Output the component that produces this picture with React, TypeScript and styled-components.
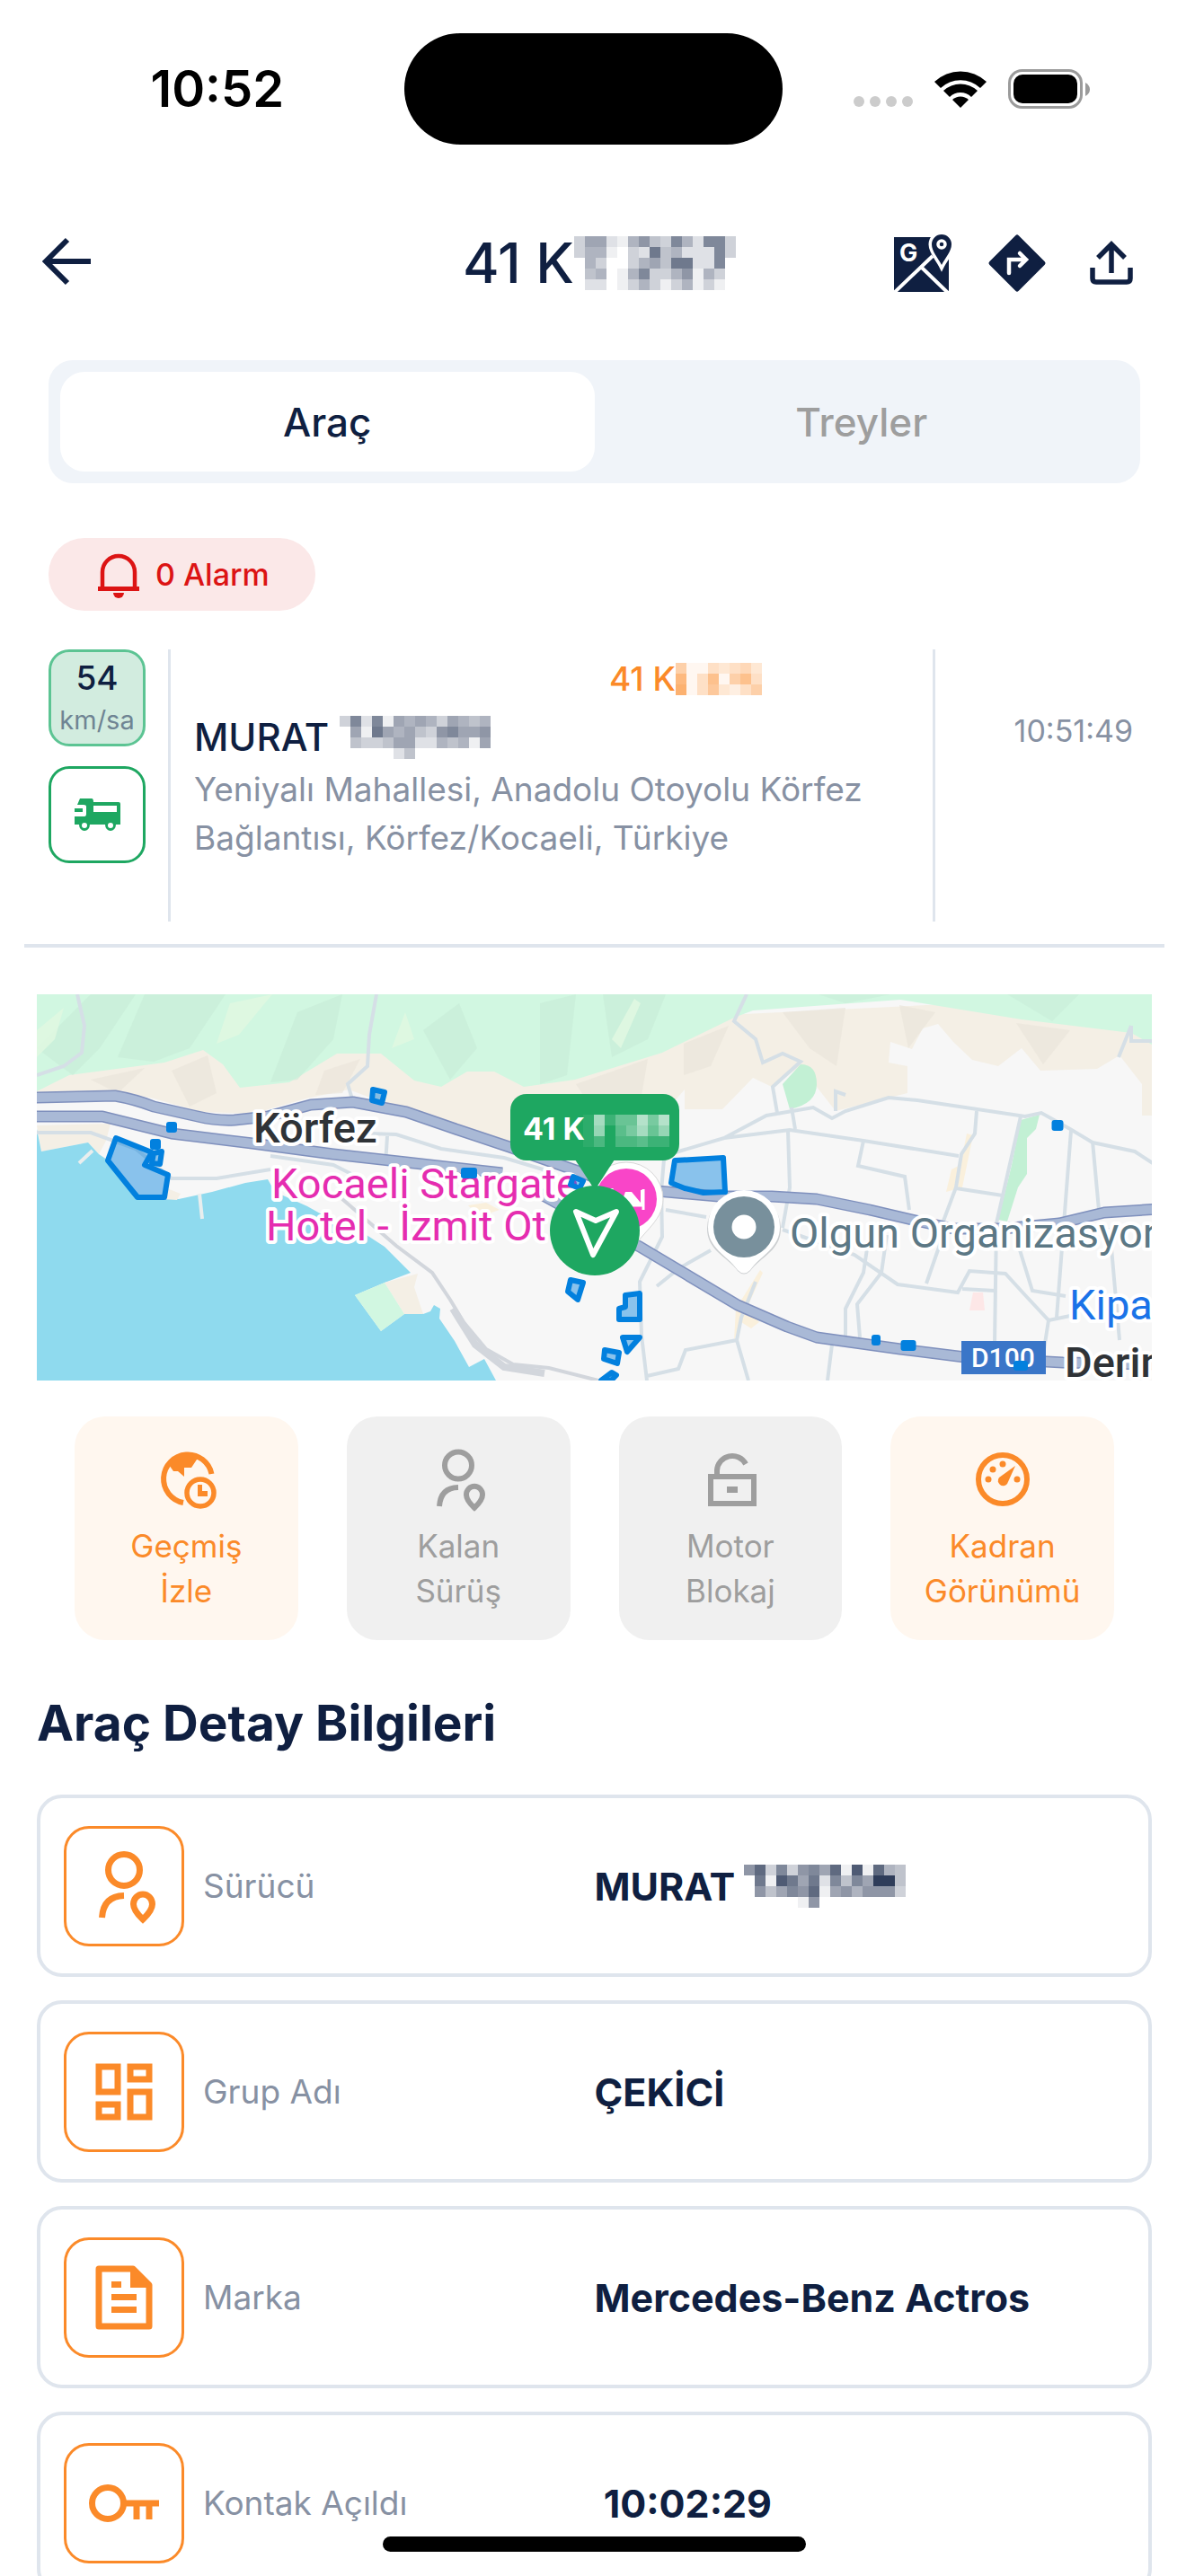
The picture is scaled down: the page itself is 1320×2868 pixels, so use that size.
import React, { useState } from "react";
import styled, { createGlobalStyle } from "styled-components";

const color = {
  navy: "#0f1f41",
  slate: "#8791a3",
  gray: "#9e9e9e",
  line: "#dfe5ed",
  orange: "#fb8a29",
  green: "#1ea761",
  red: "#dc1414",
};

const GlobalStyle = createGlobalStyle`
  *, *::before, *::after { box-sizing: border-box; }
  body {
    margin: 0;
    background: #ffffff;
    color: ${color.navy};
    font-family: Inter, "Liberation Sans", sans-serif;
  }
  button {
    border: 0;
    padding: 0;
    margin: 0;
    background: none;
    color: inherit;
    font: inherit;
    cursor: pointer;
  }
  svg { display: block; flex: none; }
`;

const Screen = styled.div`
  display: flex;
  flex-direction: column;
  height: 100vh;
  overflow: hidden;
`;

/* ---------- status bar ---------- */

const StatusBar = styled.div`
  display: grid;
  grid-template-columns: 1fr 421px 1fr;
  align-items: center;
  padding: 37px 0 24px;
  flex: none;
`;

const Clock = styled.div`
  padding-left: 34px;
  text-align: center;
  color: #000;
  font-size: 56px;
  font-weight: 600;
  line-height: 64px;
`;

const Island = styled.div`
  height: 124px;
  border-radius: 62px;
  background: #000;
`;

const StatusIcons = styled.div`
  display: flex;
  align-items: center;
  justify-content: flex-end;
  gap: 24px;
  padding-right: 106px;
`;

const Dots = styled.div`
  display: flex;
  gap: 6px;
  padding-top: 28px;
`;

const Dot = styled.span`
  width: 12px;
  height: 12px;
  border-radius: 6px;
  background: #cccccc;
`;

/* ---------- header ---------- */

const Header = styled.header`
  display: grid;
  grid-template-columns: 1fr auto 1fr;
  align-items: center;
  height: 216px;
  padding: 0 50px 0 40px;
  flex: none;
`;

const Title = styled.h1`
  display: flex;
  align-items: center;
  margin: 0;
  padding-left: 24px;
  font-size: 62px;
  font-weight: 500;
  line-height: 80px;
`;

const HeaderActions = styled.div`
  display: flex;
  justify-content: flex-end;
  gap: 39px;
`;

/* ---------- tabs ---------- */

const Tabs = styled.div`
  display: flex;
  margin: 0 51px 0 54px;
  padding: 13px;
  border-radius: 27px;
  background: #f0f4f9;
`;

const Tab = styled.button<{ $active: boolean }>`
  flex: 1;
  height: 111px;
  border-radius: 27px;
  background: ${(p) => (p.$active ? "#ffffff" : "transparent")};
  color: ${(p) => (p.$active ? color.navy : color.gray)};
  font-size: 44px;
  font-weight: 500;
`;

/* ---------- vehicle summary ---------- */

const Main = styled.main`
  flex: 1;
  min-height: 0;
  overflow: hidden;
`;

const AlarmPill = styled.button`
  display: flex;
  align-items: center;
  gap: 14px;
  height: 81px;
  margin: 61px 54px 43px;
  padding: 0 51px;
  border-radius: 40px;
  background: #fbe8e8;
  color: ${color.red};
  font-size: 34px;
  font-weight: 500;
`;

const Summary = styled.section`
  display: flex;
  min-height: 332px;
  margin: 0 24px 0 27px;
  padding: 0 27px 25px;
  border-bottom: 4px solid ${color.line};
`;

const Badges = styled.div`
  display: flex;
  flex-direction: column;
  gap: 22px;
  width: 108px;
  margin-right: 25px;
`;

const Badge = styled.div<{ $filled?: boolean }>`
  display: flex;
  flex-direction: column;
  align-items: center;
  justify-content: center;
  height: 108px;
  border: 3px solid ${(p) => (p.$filled ? "#5cc493" : color.green)};
  border-radius: 23px;
  background: ${(p) => (p.$filled ? "#d2ecdf" : "#ffffff")};
`;

const Speed = styled.span`
  font-size: 37px;
  font-weight: 500;
  line-height: 50px;
`;

const Unit = styled.span`
  color: #6f8493;
  font-size: 29px;
  line-height: 44px;
`;

const Info = styled.div`
  flex: 1;
  padding: 6px 24px 0 26px;
  border: solid ${color.line};
  border-width: 0 3px;
`;

const Plate = styled.div`
  display: flex;
  align-items: center;
  justify-content: flex-end;
  padding-right: 166px;
  color: ${color.orange};
  font-size: 37px;
  font-weight: 500;
  line-height: 54px;
`;

const DriverName = styled.div`
  display: flex;
  align-items: center;
  gap: 12px;
  margin-top: 6px;
  font-size: 42px;
  font-weight: 500;
  line-height: 63px;
`;

const Address = styled.p`
  margin: 0;
  color: ${color.slate};
  font-size: 37px;
  line-height: 54px;
`;

const UpdateTime = styled.time`
  width: 228px;
  padding: 64px 8px 0 0;
  color: ${color.slate};
  font-size: 34px;
  line-height: 54px;
  text-align: right;
`;

/* ---------- map ---------- */

const MapFrame = styled.div`
  margin: 52px 38px 0 41px;
  height: 430px;
  overflow: hidden;
  background: #f7f7f7;

  svg {
    width: 100%;
    height: 100%;
  }

  text {
    font-family: Roboto, "Liberation Sans", sans-serif;
    font-size: 47px;
    paint-order: stroke;
    stroke: #ffffff;
    stroke-width: 8px;
    stroke-linejoin: round;
  }

  text.road {
    font-size: 30px;
    stroke: none;
  }

  text.pin {
    font-family: Inter, "Liberation Sans", sans-serif;
    font-size: 34px;
    stroke: none;
  }
`;

/* ---------- quick actions ---------- */

const Actions = styled.div`
  display: grid;
  grid-template-columns: repeat(4, 1fr);
  gap: 54px;
  margin: 40px 80px 0 83px;
`;

const Action = styled.button<{ $muted?: boolean }>`
  display: flex;
  flex-direction: column;
  align-items: center;
  gap: 13px;
  height: 249px;
  padding-top: 34px;
  border-radius: 34px;
  background: ${(p) => (p.$muted ? "#f0f0f0" : "#fff7ef")};
  color: ${(p) => (p.$muted ? color.gray : color.orange)};
  font-size: 35px;
  line-height: 50px;
  white-space: pre-line;
`;

/* ---------- details ---------- */

const SectionTitle = styled.h2`
  margin: 52px 41px 39px;
  font-size: 55px;
  font-weight: 700;
  line-height: 81px;
`;

const DetailList = styled.dl`
  display: flex;
  flex-direction: column;
  gap: 26px;
  margin: 0 38px 0 41px;
`;

const DetailRow = styled.div`
  display: grid;
  grid-template-columns: 1fr 1fr;
  align-items: center;
  height: 203px;
  padding: 0 26px;
  border: 4px solid ${color.line};
  border-radius: 28px;
`;

const DetailLabel = styled.dt`
  display: flex;
  align-items: center;
  gap: 21px;
  color: ${color.slate};
  font-size: 37px;
`;

const DetailIcon = styled.span`
  display: flex;
  align-items: center;
  justify-content: center;
  width: 134px;
  height: 134px;
  border: 3px solid ${color.orange};
  border-radius: 28px;
  color: ${color.orange};
`;

const DetailValue = styled.dd`
  display: flex;
  align-items: center;
  gap: 10px;
  margin: 0;
  font-size: 43px;
  font-weight: 700;
  white-space: pre;
`;

const HomeIndicator = styled.div`
  position: fixed;
  bottom: 27px;
  left: 50%;
  width: 471px;
  height: 17px;
  margin-left: -234px;
  border-radius: 9px;
  background: #000;
`;

/* ---------- censored text ---------- */

/* Each character is one cell; a hex digit gives the cell's opacity, "." is empty. */
function Mosaic({ rows, fill, cell = 12 }: { rows: string[]; fill: string; cell?: number }) {
  const width = Math.max(...rows.map((r) => r.length)) * cell;
  return (
    <svg width={width} height={rows.length * cell} shapeRendering="crispEdges" aria-hidden="true">
      {rows.flatMap((row, y) =>
        [...row].map((c, x) =>
          c === "." ? null : (
            <rect key={`${x}-${y}`} x={x * cell} y={y * cell} width={cell} height={cell} fill={fill} opacity={parseInt(c, 16) / 15} />
          ),
        ),
      )}
    </svg>
  );
}

const titleMosaic = [
  "366215743852883",
  "3551.3294522283",
  ".53..356499228.",
  ".45.1583357153.",
  ".22.1353135131.",
];
const plateMosaic = ["61143453", "91481684", "a1473246"];
const nameMosaic = ["38281656536545", ".6196564378667", ".4334662254516", ".....24......."];
const detailMosaic = ["7a383786a1b1a54", ".91b96928486dd4", ".74687a16757773", ".....17........"];
const pinMosaic = ["19255a6a", "18.46958", "13.33422"];

/* ---------- icons ---------- */

const WifiIcon = () => (
  <svg width="58" height="42" viewBox="0 0 58 42" aria-hidden="true">
    <path d="M0 13A42 42 0 0 1 58 13L51 20A32 32 0 0 0 7 20Z" />
    <path d="M10 23A28 28 0 0 1 48 23L41 30A17 17 0 0 0 17 30Z" />
    <path d="M20 33A13 13 0 0 1 38 33L29 42Z" />
  </svg>
);

const BatteryIcon = () => (
  <svg width="92" height="44" viewBox="0 0 92 44" aria-hidden="true">
    <rect x="1.5" y="1.5" width="80" height="41" rx="14" fill="none" stroke="#9b9b9b" strokeWidth="3" />
    <rect x="6" y="6" width="71" height="32" rx="10" />
    <path d="M86 15Q91 18 91 22.500Q91 27 86 30Z" fill="#9b9b9b" />
  </svg>
);

const BackIcon = () => (
  <svg width="66" height="66" viewBox="0 0 66 66" fill="none" stroke="currentColor" strokeWidth="6" aria-hidden="true">
    <path d="M61 33H11M35 9L11 33L35 57" />
  </svg>
);

const MapsIcon = () => (
  <svg width="66" height="66" viewBox="0 0 66 66" aria-hidden="true">
    <path d="M1 4H62V65H1Z" fill="currentColor" />
    <path d="M1 66L44 25M32 38L62 67" stroke="#fff" strokeWidth="4" />
    <text x="7" y="31" fontSize="27" fontWeight="700" fill="#fff">G</text>
    <path d="M54 1A11 11 0 0 1 65 12C65 20 58 27 54 35C50 27 43 20 43 12A11 11 0 0 1 54 1Z" fill="currentColor" stroke="#fff" strokeWidth="7" paintOrder="stroke" />
    <circle cx="54" cy="12" r="4" fill="none" stroke="#fff" strokeWidth="3.500" />
  </svg>
);

const DirectionsIcon = () => (
  <svg width="66" height="66" viewBox="0 0 66 66" aria-hidden="true">
    <path d="M33 4L62 33L33 62L4 33Z" fill="currentColor" stroke="currentColor" strokeWidth="5" strokeLinejoin="round" />
    <path d="M24 44V29H42M36 22L43 29L36 36" fill="none" stroke="#fff" strokeWidth="4.500" strokeLinecap="round" />
  </svg>
);

const ShareIcon = () => (
  <svg width="66" height="66" viewBox="0 0 66 66" fill="none" stroke="currentColor" strokeWidth="5.500" aria-hidden="true">
    <path d="M33 44V12M18 27L33 12L48 27" />
    <path d="M12 38V50Q12 54 16 54H50Q54 54 54 50V38" />
  </svg>
);

const BellIcon = () => (
  <svg width="54" height="54" viewBox="0 0 54 54" aria-hidden="true">
    <path d="M9 41V24A18 18 0 0 1 45 24V41" fill="none" stroke="currentColor" strokeWidth="4.500" />
    <path d="M4 40H50V45H4Z" fill="currentColor" />
    <path d="M21 47H33A6 6 0 0 1 21 47Z" fill="currentColor" />
  </svg>
);

const TruckIcon = () => (
  <svg width="54" height="54" viewBox="0 0 54 54" aria-hidden="true">
    <path
      fill={color.green}
      fillRule="evenodd"
      d="M8 9H21Q23 9 23 13H51Q53 13 53 15V38H48A6 7 0 0 1 36 38H19A6 7 0 0 1 7 38H2V29H13Q15 29 15 26V18Q15 16 12 16H5ZM23 17V24H49V17Z"
    />
    <circle cx="13" cy="39" r="3" fill="#fff" />
    <circle cx="42" cy="39" r="3" fill="#fff" />
    <path fill={color.green} d="M2 20H11V24H2Z" />
  </svg>
);

const DriverIcon = ({ size = 84 }: { size?: number }) => (
  <svg width={size} height={size} viewBox="0 0 84 84" fill="none" stroke="currentColor" strokeWidth="7" aria-hidden="true">
    <circle cx="42" cy="24" r="17.500" />
    <path d="M17.500 77Q19 53 42 52.500" />
    <path d="M63 79Q52.500 69 52.500 62A10.500 11 0 0 1 73.500 62Q73.500 69 63 79Z" />
  </svg>
);

const GridIcon = () => (
  <svg width="84" height="84" viewBox="0 0 84 84" fill="none" stroke="currentColor" strokeWidth="7" aria-hidden="true">
    <path d="M14 14H35V42H14ZM49 14H70V28H49ZM14 56H35V70H14ZM49 42H70V70H49Z" />
  </svg>
);

const DocumentIcon = () => (
  <svg width="84" height="84" viewBox="0 0 84 84" aria-hidden="true">
    <path d="M14 10H52L70 28V74H14Z" fill="none" stroke="currentColor" strokeWidth="7" strokeLinejoin="round" />
    <path d="M49 7H53L73 28V31H49ZM28 24H39V31H28ZM28 38H56V45H28ZM28 52H56V59H28Z" fill="currentColor" />
  </svg>
);

const KeyIcon = () => (
  <svg width="84" height="84" viewBox="0 0 84 84" fill="none" stroke="currentColor" strokeWidth="7" aria-hidden="true">
    <circle cx="24" cy="42" r="17.500" />
    <path d="M43 42H81M56 42V60M70 42V60" />
  </svg>
);

const HistoryIcon = () => (
  <svg width="72" height="72" viewBox="0 0 72 72" aria-hidden="true">
    <path d="M33 62A27 27 0 1 1 64.500 30" fill="none" stroke="currentColor" strokeWidth="6" />
    <path d="M15 17L22 27L27 27L34 33L34 23H42L48 14L54 13L46 8L32 7Z" fill="currentColor" />
    <circle cx="52" cy="51" r="15" fill="none" stroke="currentColor" strokeWidth="5.500" />
    <path d="M49 42H54V49H60V55H49Z" fill="currentColor" />
  </svg>
);

const UnlockIcon = () => (
  <svg width="72" height="72" viewBox="0 0 72 72" aria-hidden="true">
    <path d="M14 33H62V63H14ZM21 33V26A17 17 0 0 1 53 19" fill="none" stroke="currentColor" strokeWidth="6" />
    <path d="M32 44H44V51H32Z" fill="currentColor" />
  </svg>
);

const GaugeIcon = () => (
  <svg width="72" height="72" viewBox="0 0 72 72" fill="currentColor" aria-hidden="true">
    <circle cx="36" cy="36" r="27" fill="none" stroke="currentColor" strokeWidth="6" />
    <path d="M32 34L50 21L41 41A5.500 5.500 0 1 1 32 34Z" />
    <circle cx="20" cy="36" r="3.500" />
    <circle cx="25" cy="25" r="3.500" />
    <circle cx="36" cy="19" r="3.500" />
    <circle cx="52" cy="36" r="3.500" />
  </svg>
);

/* ---------- map drawing ---------- */

const motorways = [
  "M-5 115L87 113Q110 117 130 125L179 136Q200 141 220 140L257 136L305 123L352 120L411 131L469 151L526 170L625 205L690 219L759 225L818 225L868 228L927 240L974 251L1020 261H1075L1138 255L1188 243L1250 239",
  "M-5 136H73L150 155L240 166L330 178L411 187L518 199",
  "M560 222L620 255L671 281L780 346L835 370L868 382L961 395L1033 404L1142 410L1250 412",
];

const streets = [
  "M0 154H60L110 172L150 205H200L260 195",
  "M260 180L330 190L350 200M370 155L400 156L450 172L520 182L570 197M390 158L388 190",
  "M45 0L53 35L50 65L30 80L0 90M378 0L370 45L368 80L346 100L352 120",
  "M711 176L765 160L838 151L920 163L1026 180M765 160L812 135L864 126L885 138L900 130L948 115L980 118L1100 136L1118 132L1150 150L1175 165L1222 175L1242 188",
  "M840 126L844 150M824 132L819 103L850 75L830 66L808 76L800 50L776 30L790 0M836 152L838 215L830 260M920 163L914 191L966 203L971 240",
  "M1046 130L1044 155L1029 178L1023 215L1008 255M1023 216L1075 224M1095 136L1068 255L1066 390M1151 152L1145 230L1135 360M1175 164L1182 240",
  "M699 172L695 219L696 270L671 320L673 380L679 430M700 240L745 248M750 285L715 305L690 325M679 425L714 417L722 396L779 385M779 385L784 360L800 320M779 385L792 430",
  "M830 262L910 290L958 323L1025 332L1038 308L1078 311L1100 335L1126 363L1121 395M926 270L920 310L900 350L900 380M946 268L940 310L913 345L916 382M1008 270L990 322M1087 262L1108 330L1145 336M1030 328L1066 330M1194 260L1205 385M885 390L880 430M1126 363L1150 358",
  "M1218 35L1204 70M1218 35V52H1242M889 130V108L900 112",
];

const hillShades = [
  "M0 60L40 20L60 0H110L70 60L40 90Z",
  "M120 0H210L170 60L130 75L90 70Z",
  "M290 20L340 0L330 50L290 95L260 98Z",
  "M430 40L470 10L490 60L460 95Z",
  "M560 10L600 0L590 90L560 100Z",
  "M630 0H700L680 50L640 70Z",
  "M870 0H950L900 10Z",
  "M1080 0L1160 0L1130 30Z",
];

const rockShades = [
  "M60 95L120 82L90 110Z",
  "M150 85L190 68L200 110L170 125Z",
  "M320 85L360 72L340 110L310 112Z",
  "M600 100L680 72L670 130L640 160Z",
  "M720 55L770 35L750 80L720 90Z",
  "M830 20L900 15L890 80L860 60Z",
  "M960 12L1000 20L970 60Z",
  "M1090 32L1150 40L1120 78Z",
];

const zones = [
  "M88 160L128 176L120 190L146 201L142 226H112L79 185Z",
  "M710 185L764 182L766 220L742 221L721 216L706 210Z",
  "M374 106L387 109L384 121L373 118Z",
  "M594 318L608 321L602 340L591 331Z",
  "M655 335L671 333V362H648V350L655 348Z",
  "M652 382L671 382L657 398Z",
  "M632 396L648 399L646 411L631 406Z",
  "M628 430L640 421L645 424L639 430Z",
  "M130 177L139 175L137 189L128 188Z",
  "M597 203L608 208L604 216L594 212Z",
];

const zoneDots: [number, number, number][] = [
  [150, 148, 8],
  [132, 167, 8],
  [481, 199, 14],
  [1136, 146, 9],
  [934, 385, 6],
  [970, 391, 13],
];

function VehicleMap() {
  return (
    <svg viewBox="0 0 1241 430" preserveAspectRatio="xMidYMid slice" role="img" aria-label="Araç konumu haritası">
      <rect width="1241" height="430" fill="#f7f7f7" />
      <path
        fill="#f4efe5"
        d="M0 60V110L89 108L130 116L183 131L240 133L300 116L347 106L411 130L526 166L640 170L700 130L721 106V128H763L797 93L818 103L850 80L889 130L969 110V80L948 76L950 53L974 61L986 38L1003 33L1020 53L1041 73L1070 80L1096 60L1117 85L1180 83L1205 68L1230 100V135H1241V0Z"
      />
      <path fill="#f4efe5" d="M0 146L82 144L77 163L69 178L57 165L5 175Z" />
      <g fill="#ebe6dc" opacity=".7">
        {rockShades.map((d) => <path key={d} d={d} />)}
      </g>
      <path
        fill="#d1f7e1"
        d="M0 0V108L36 90L142 76L185 62L207 78L226 104L281 98L334 66H383L420 96L450 103L479 86H509L542 103L599 95L696 65L776 26L797 18L961 6L1096 28L1218 43L1241 56V0Z"
      />
      <g fill="#c8ecd8" opacity=".6">
        {hillShades.map((d) => <path key={d} d={d} />)}
      </g>
      <g fill="#e2f9e2" opacity=".8">
        <path d="M215 10L262 0L225 45L200 55Z" />
        <path d="M0 40L30 15L20 50L0 70ZM395 60L410 20L420 50ZM640 50L665 5L672 10L650 60Z" />
      </g>
      <path fill="#c2f0d4" d="M850 78Q868 78 868 100Q868 122 838 128L830 100Z" />
      <path fill="#c2f0d4" d="M1095 140L1116 134L1112 150L1102 160V200L1092 215L1080 253L1070 251L1085 190Z" />
      <path fill="#faf0dc" d="M1035 155L1042 157L1030 215L1012 220L1018 195L1028 190ZM805 307L808 310L790 350L804 365L795 372L784 365L776 385L778 350ZM480 235L500 232L515 240L500 245L485 240Z" />
      <path fill="#fde7e7" d="M1042 332H1053L1055 352H1038Z" />
      <path
        fill="#8fdaee"
        d="M0 150L5 175L57 165L69 178L81 186L114 223L158 228L195 220L232 210L257 206L265 220L301 236L326 250L367 268L387 281L416 310L387 321L354 335L383 375L409 356L426 351L430 356L438 353L442 346L449 350L448 361L465 386L481 415L498 406L511 430H0Z"
      />
      <path fill="#f4efe5" d="M387 321L424 311L420 326L430 356L409 356ZM142 215L160 222L156 229L140 228Z" />
      <path fill="#d1f7e1" d="M387 321L409 356L383 375L354 335Z" />
      <path d="M62 174L47 188M181 222L184 250" stroke="#e9eeee" strokeWidth="4" />
      <g fill="none" stroke="#d5dfe6" strokeWidth="4">
        {streets.map((d) => <path key={d} d={d} />)}
      </g>
      <path d="M340 228L400 280L440 310L460 340L475 365L500 395L530 412L570 416L625 430" fill="none" stroke="#d2d6dc" strokeWidth="4" />
      <path d="M463 350L488 390L520 415L565 422" fill="none" stroke="#d2d6dc" strokeWidth="8" />
      <g fill="none" stroke="#7f90bd" strokeWidth="13" strokeLinejoin="round">
        {motorways.map((d) => <path key={d} d={d} />)}
      </g>
      <g fill="none" stroke="#a9b9d6" strokeWidth="10" strokeLinejoin="round">
        {motorways.map((d) => <path key={d} d={d} />)}
      </g>

      <text x="241" y="165" fill="#2f3337" fontWeight="500">Körfez</text>
      <text x="261" y="227" fill="#e52db0">Kocaeli Stargate</text>
      <text x="255" y="274" fill="#e52db0">Hotel - İzmit Ot</text>
      <text x="838" y="282" fill="#5c7885">Olgun Organizasyon</text>
      <text x="1149" y="362" fill="#1a73e8">Kipa</text>
      <rect x="1029" y="386" width="94" height="37" fill="#3a76c8" />
      <text x="1040" y="415" className="road" fill="#ffffff" fontWeight="500">D100</text>
      <text x="1144" y="426" fill="#2f3337" fontWeight="500">Derin</text>

      <g fill="#0280de" fillOpacity=".45" stroke="#0280de" strokeWidth="6" strokeLinejoin="round">
        {zones.map((d) => <path key={d} d={d} />)}
      </g>
      <g fill="#0280de">
        {zoneDots.map(([x, y, w]) => (
          <rect key={x} x={x - w / 2 - 2} y={y - 6} width={w + 4} height="12" rx="3" />
        ))}
        <rect x="1087" y="408" width="16" height="11" rx="3" />
      </g>

      <path d="M656 187A41 41 0 0 1 697 228C697 255 670 265 656 296C642 265 615 255 615 228A41 41 0 0 1 656 187Z" fill="#fff" stroke="#d8d8d8" strokeWidth="1" />
      <circle cx="656" cy="228" r="34" fill="#f945c8" />
      <path d="M640 216V240M640 235H675M675 240V217" stroke="#fff" strokeWidth="3" fill="none" />
      <path d="M655 220H662L672 232V218H674V234H650Z" fill="#fff" />

      <path d="M787 220A41 41 0 0 1 828 261C828 285 806 292 794 308Q787 315 780 308C768 292 746 285 746 261A41 41 0 0 1 787 220Z" fill="#b9bdc0" opacity=".7" />
      <path d="M787 218A40 40 0 0 1 827 259C827 283 806 290 794 307Q787 314 780 307C768 290 747 283 747 259A40 40 0 0 1 787 218Z" fill="#fff" />
      <circle cx="787" cy="259" r="34" fill="#78909c" />
      <circle cx="787" cy="259" r="13.500" fill="#fff" />

      <rect x="527" y="111" width="188" height="74" rx="18" fill={color.green} />
      <path d="M599 184H643L621 218Z" fill={color.green} />
      <text x="541" y="162" className="pin" fill="#ffffff" fontWeight="700">41 K</text>
      <svg x="608" y="134" width="96" height="36">
        <Mosaic rows={pinMosaic} fill="#ffffff" />
      </svg>
      <circle cx="621" cy="263" r="50" fill={color.green} />
      <path d="M600 242L622 252L645 242L619 290Z" fill="none" stroke="#fff" strokeWidth="6" strokeLinejoin="round" />
    </svg>
  );
}

/* ---------- page ---------- */

const actions = [
  { label: "Geçmiş\nİzle", icon: <HistoryIcon />, muted: false },
  { label: "Kalan\nSürüş", icon: <DriverIcon size={72} />, muted: true },
  { label: "Motor\nBlokaj", icon: <UnlockIcon />, muted: true },
  { label: "Kadran\nGörünümü", icon: <GaugeIcon />, muted: false },
];

const details = [
  { label: "Sürücü", value: "MURAT", icon: <DriverIcon />, masked: true },
  { label: "Grup Adı", value: "ÇEKİCİ", icon: <GridIcon /> },
  { label: "Marka", value: "Mercedes-Benz Actros", icon: <DocumentIcon /> },
  { label: "Kontak Açıldı", value: " 10:02:29", icon: <KeyIcon /> },
];

export default function App() {
  const [tab, setTab] = useState("Araç");
  return (
    <Screen>
      <GlobalStyle />
      <StatusBar>
        <Clock>10:52</Clock>
        <Island />
        <StatusIcons>
          <Dots>
            <Dot />
            <Dot />
            <Dot />
            <Dot />
          </Dots>
          <WifiIcon />
          <BatteryIcon />
        </StatusIcons>
      </StatusBar>

      <Header>
        <div>
          <button aria-label="Geri"><BackIcon /></button>
        </div>
        <Title>
          41 K
          <Mosaic rows={titleMosaic} fill={color.navy} />
        </Title>
        <HeaderActions>
          <button aria-label="Google Haritalar"><MapsIcon /></button>
          <button aria-label="Yol tarifi"><DirectionsIcon /></button>
          <button aria-label="Paylaş"><ShareIcon /></button>
        </HeaderActions>
      </Header>

      <Main>
        <Tabs role="tablist">
          {["Araç", "Treyler"].map((name) => (
            <Tab key={name} role="tab" aria-selected={tab === name} $active={tab === name} onClick={() => setTab(name)}>
              {name}
            </Tab>
          ))}
        </Tabs>

        <AlarmPill>
          <BellIcon />
          0 Alarm
        </AlarmPill>

        <Summary>
          <Badges>
            <Badge $filled>
              <Speed>54</Speed>
              <Unit>km/sa</Unit>
            </Badge>
            <Badge>
              <TruckIcon />
            </Badge>
          </Badges>
          <Info>
            <Plate>
              41 K
              <Mosaic rows={plateMosaic} fill={color.orange} />
            </Plate>
            <DriverName>
              MURAT
              <Mosaic rows={nameMosaic} fill={color.navy} />
            </DriverName>
            <Address>Yeniyalı Mahallesi, Anadolu Otoyolu Körfez Bağlantısı, Körfez/Kocaeli, Türkiye</Address>
          </Info>
          <UpdateTime>10:51:49</UpdateTime>
        </Summary>

        <MapFrame>
          <VehicleMap />
        </MapFrame>

        <Actions>
          {actions.map((a) => (
            <Action key={a.label} $muted={a.muted}>
              {a.icon}
              {a.label}
            </Action>
          ))}
        </Actions>

        <SectionTitle>Araç Detay Bilgileri</SectionTitle>
        <DetailList>
          {details.map((d) => (
            <DetailRow key={d.label}>
              <DetailLabel>
                <DetailIcon>{d.icon}</DetailIcon>
                {d.label}
              </DetailLabel>
              <DetailValue>
                {d.value}
                {d.masked && <Mosaic rows={detailMosaic} fill={color.navy} />}
              </DetailValue>
            </DetailRow>
          ))}
        </DetailList>
      </Main>
      <HomeIndicator />
    </Screen>
  );
}
